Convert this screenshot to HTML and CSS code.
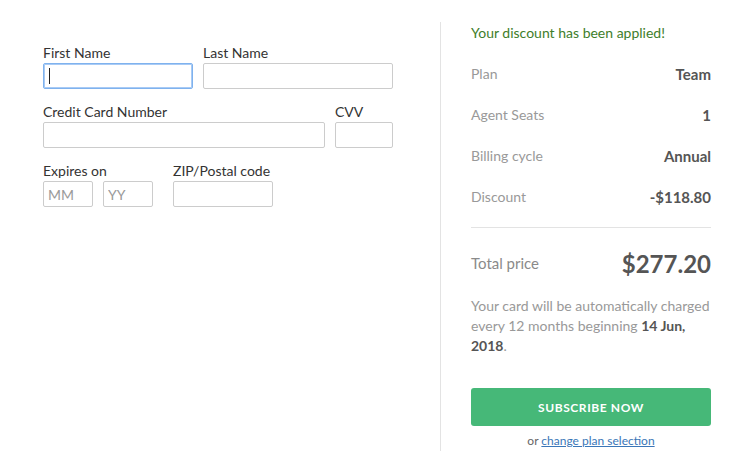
FILE: index.html
```html
<!DOCTYPE html>
<html>
<head>
<meta charset="utf-8">
<link rel="stylesheet" href="styles.css">
</head>
<body>
<div class="page">
  <div class="form-col">
    <div class="row">
      <div class="field w150">
        <label class="label">First Name</label>
        <div class="caret-wrap">
          <input class="input focused" type="text">
          <span class="caret"></span>
        </div>
      </div>
      <div class="field w190">
        <label class="label">Last Name</label>
        <input class="input" type="text">
      </div>
    </div>
    <div class="row">
      <div class="field w282">
        <label class="label">Credit Card Number</label>
        <input class="input" type="text">
      </div>
      <div class="field w58">
        <label class="label">CVV</label>
        <input class="input" type="text">
      </div>
    </div>
    <div class="row">
      <div class="field">
        <label class="label">Expires on</label>
        <div class="pair">
          <input class="input w50" type="text" placeholder="MM">
          <input class="input w50" type="text" placeholder="YY">
        </div>
      </div>
      <div class="field zip">
        <label class="label">ZIP/Postal code</label>
        <input class="input w100" type="text">
      </div>
    </div>
  </div>
  <div class="summary-col">
    <div class="notice">Your discount has been applied!</div>
    <div class="line"><span class="key">Plan</span><span class="val">Team</span></div>
    <div class="line"><span class="key">Agent Seats</span><span class="val">1</span></div>
    <div class="line"><span class="key">Billing cycle</span><span class="val">Annual</span></div>
    <div class="line"><span class="key">Discount</span><span class="val">-$118.80</span></div>
    <div class="divider"></div>
    <div class="total"><span class="total-key">Total price</span><span class="total-val">$277.20</span></div>
    <p class="note"><span>Your card will be automatically charged</span> <span>every 12 months beginning</span> <strong>14 Jun,</strong> <strong>2018</strong>.</p>
    <button class="btn">SUBSCRIBE NOW</button>
    <div class="alt">or <a href="#" class="alt-link">change plan selection</a></div>
  </div>
</div>
</body>
</html>
```
FILE: styles.css
```css
* { box-sizing: border-box; }
html, body { margin: 0; padding: 0; background: #fff; }
body { font-family: Lato, "Noto Sans", sans-serif; color: #333; }
.page { display: flex; padding-top: 22px; width: 756px; }
.form-col { width: 440px; padding: 22px 0 0 43px; }
.row { display: flex; gap: 10px; margin-bottom: 14px; }
.field { display: flex; flex-direction: column; }
.w150 { width: 150px; }
.w190 { width: 190px; }
.w282 { width: 282px; }
.w58 { width: 58px; }
.w50 { width: 50px; }
.w100 { width: 100px; }
.zip { margin-left: 10px; }
.pair { display: flex; gap: 10px; }
.label { font-size: 14px; line-height: 18px; height: 18px; margin-bottom: 1px; color: #333; }
.input { height: 26px; border: 1px solid #ccc; border-radius: 2px; padding: 0 4px; font-family: Lato, sans-serif; font-size: 14px; color: #333; background: #fff; width: 100%; outline: none; }
.input.w50 { width: 50px; }
.input.w100 { width: 100px; }
.input::placeholder { color: #9a9a9a; }
.input.focused { border-color: #7fb2ee; box-shadow: 0 0 0 1px #a9cbf5 inset; }
.caret-wrap { position: relative; }
.caret { position: absolute; left: 6px; top: 5px; width: 1px; height: 16px; background: #222; }
.summary-col { width: 316px; border-left: 1px solid #e3e3e3; padding: 0 45px 0 30px; min-height: 428px; }
.notice { color: #3e7d2a; font-size: 14px; line-height: 22px; margin-bottom: 9px; }
.line { display: flex; justify-content: space-between; align-items: center; height: 41px; }
.key { color: #999; font-size: 14px; }
.val { color: #555; font-size: 15px; font-weight: bold; }
.divider { height: 1px; background: #e3e3e3; margin-top: 10px; }
.total { display: flex; justify-content: space-between; align-items: center; height: 36px; margin-top: 17px; }
.total-key { color: #8a8a8a; font-size: 15px; }
.total-val { color: #555; font-size: 24px; font-weight: bold; }
.note { margin: 15px 0 0; color: #999; font-size: 14px; line-height: 20px; }
.note strong { color: #555; }
.btn { display: block; width: 240px; height: 38px; margin-top: 32px; border: none; border-radius: 3px; background: #46b878; color: #fff; font-family: Lato, sans-serif; font-weight: bold; font-size: 12px; letter-spacing: 0.6px; }
.alt { text-align: center; font-size: 12px; line-height: 20px; margin-top: 5px; color: #666; }
.alt-link { color: #3a76b8; text-decoration: underline; }
```
